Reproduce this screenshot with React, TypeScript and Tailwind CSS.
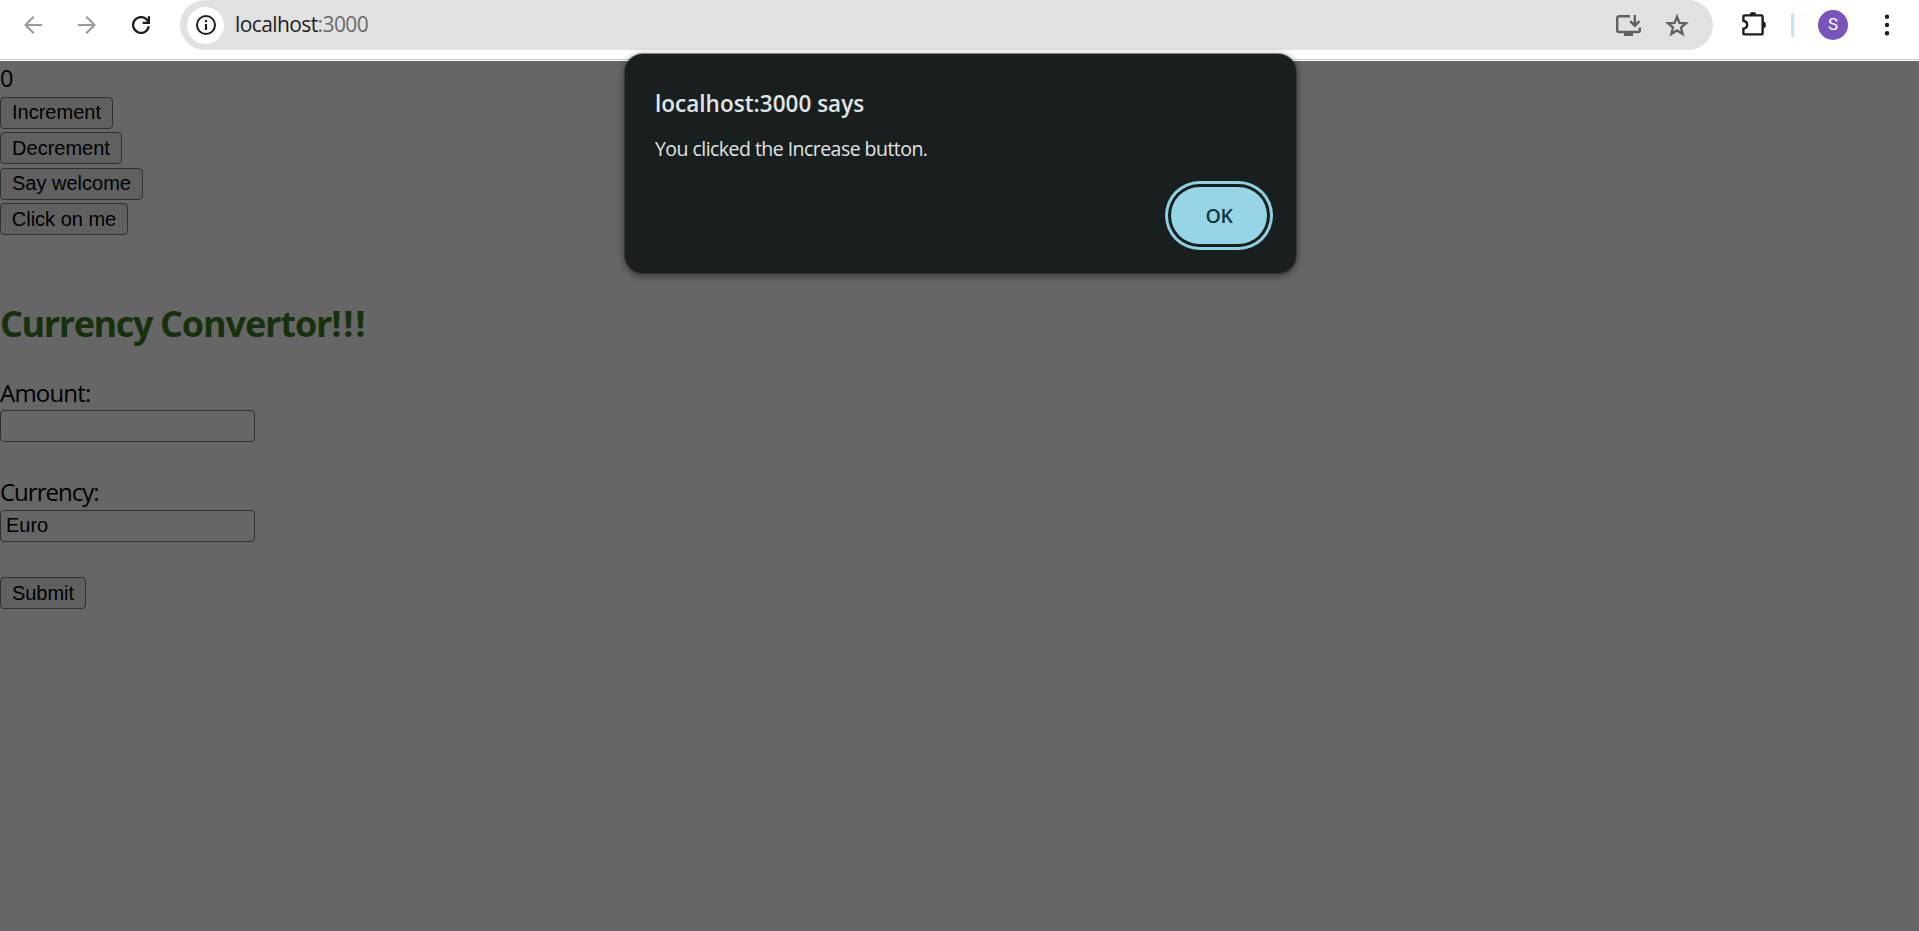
import type { ReactNode } from "react";

function PageButton({ className, children }: { className: string; children: ReactNode }) {
  return (
    <button
      className={`block h-8 shrink-0 rounded-[4px] border border-[#303030] bg-[#606060] text-center text-[20px] leading-[28px] text-black ${className}`}
      style={{ fontFamily: '"Liberation Sans", Arial, sans-serif' }}
    >
      {children}
    </button>
  );
}

function Toolbar() {
  return (
    <header className="flex h-[61px] w-full shrink-0 flex-col bg-white">
      <div className="flex h-[50px] items-center">
        <svg className="ml-[24px] h-[18px] w-[18px]" viewBox="0 0 18 18" fill="none" stroke="#9b9b9b" strokeWidth="2.2">
          <path d="M18 9H1.5M9.7.8 1.5 9l8.2 8.2" />
        </svg>
        <svg className="ml-[36px] h-[18px] w-[18px]" viewBox="0 0 18 18" fill="none" stroke="#9b9b9b" strokeWidth="2.2">
          <path d="M0 9h16.5M8.3.8 16.5 9l-8.2 8.2" />
        </svg>
        <svg className="ml-[36px] h-[18px] w-[18px]" viewBox="0 0 18 18" fill="none" stroke="#1f1f23" strokeWidth="2.3">
          <path d="M16.8 10.3A7.9 7.9 0 1 1 15 3.8l1.9 2.4M16.9.2v6.6h-6.3" />
        </svg>
        <div className="ml-[30px] flex h-[50px] w-[1533px] items-center rounded-full bg-[#e1e1e1]">
          <span className="ml-[7px] flex h-[37px] w-[37px] items-center justify-center rounded-full bg-white">
            <svg className="h-5 w-5" viewBox="0 0 20 20" fill="none" stroke="#1f1f23" strokeWidth="2">
              <circle cx="10" cy="10" r="9" />
              <path d="M10 9v6M10 5v2.2" strokeWidth="2.2" />
            </svg>
          </span>
          <span className="mb-0.5 ml-[11px] text-[21px] leading-[28px] tracking-[-0.6px] text-[#1f1f23]">
            localhost<span className="text-[#6b6b6b]">:3000</span>
          </span>
          <svg className="ml-auto h-[21px] w-[25px]" viewBox="0 0 25 21" fill="none" stroke="#5f6063" strokeWidth="2.4">
            <path d="M14 1.2H3.2a2 2 0 0 0-2 2V15a2 2 0 0 0 2 2h18.6a2 2 0 0 0 2-2v-2.5" />
            <path d="M18.8 0v10.2M14.2 6.2l4.6 4.6 4.6-4.6" />
            <path d="M8 17h9v4H8z" fill="#5f6063" stroke="none" />
          </svg>
          <svg className="mr-[24px] ml-[24px] h-[23px] w-[24px]" viewBox="0 0 24 23" fill="none" stroke="#5f6063" strokeWidth="2.3">
            <path d="m12 2.7 2.4 6.1 6.6.5-5 4.2 1.6 6.4L12 16.4l-5.6 3.5L8 13.5l-5-4.2 6.6-.5z" />
          </svg>
        </div>
        <svg className="mb-0.5 ml-[29px] h-[24px] w-[25px]" viewBox="0 0 25 24" fill="none" stroke="#1f1f23" strokeWidth="2.4">
          <path d="M2.4 3.4h17a1.2 1.2 0 0 1 1.2 1.2v16.6a1.2 1.2 0 0 1-1.2 1.2h-17a1 1 0 0 1-1-1v-4.8c2.5-.3 3.800-2 3.800-3.900S3.900 9.200 1.400 8.700V4.400a1 1 0 0 1 1-1z" />
          <path d="M7.6 3.4a3.4 3.4 0 0 1 6.8 0zM20.6 9.6a3.3 3.3 0 0 1 0 6.6z" fill="#1f1f23" stroke="none" />
        </svg>
        <span className="ml-[24px] h-6 w-[3px] rounded-full bg-[#bde7f1]" />
        <span
          className="ml-[24px] flex h-[30px] w-[30px] items-center justify-center rounded-full bg-[#7856b9] text-[17px] text-white"
          style={{ fontFamily: "Roboto, sans-serif" }}
        >
          S
        </span>
        <svg className="ml-[36px] h-[22px] w-[6px]" viewBox="0 0 6 22" fill="#1f1f23">
          <circle cx="3" cy="2.8" r="2.2" />
          <circle cx="3" cy="11" r="2.2" />
          <circle cx="3" cy="19.2" r="2.2" />
        </svg>
      </div>
      <div className="mt-[9px] h-px w-full bg-[#c8c8c8]" />
    </header>
  );
}

function AlertDialog() {
  return (
    <div className="absolute top-[54px] left-[625px] flex h-[219px] w-[671px] flex-col rounded-[18px] bg-[#191e1e] pl-[30px] text-[#e1e5e5] shadow-[0_2px_7px_1px_rgba(0,0,0,0.45),0_0_0_1px_rgba(40,48,48,0.45)]">
      <h1 className="mt-[34px] h-8 text-[22.5px] leading-8 font-semibold tracking-[0.02px]">localhost:3000 says</h1>
      <p className="mt-[15px] h-7 text-[19.5px] leading-7 tracking-[-0.54px]">You clicked the Increase button.</p>
      <button className="mt-[24px] ml-[516px] h-[57px] w-[96px] rounded-full bg-[#96d5e5] text-[19.5px] font-semibold tracking-[-0.5px] text-[#123640] ring-3 ring-[#8ed0e0] ring-offset-3 ring-offset-[#191e1e]">
        OK
      </button>
    </div>
  );
}

export default function App() {
  return (
    <div
      className="relative flex h-[931px] w-full flex-col overflow-hidden bg-[#666666]"
      style={{ fontFamily: '"Open Sans", "Noto Sans", sans-serif' }}
    >
      <Toolbar />
      <main className="flex flex-1 flex-col items-start text-[24px] leading-[32px] text-black">
        <div className="h-9 pt-px text-[23.5px]">0</div>
        <PageButton className="w-[113px] pb-[2px]">Increment</PageButton>
        <PageButton className="mt-[3px] w-[122px]">Decrement</PageButton>
        <PageButton className="mt-1 w-[143px] pb-[2px]">Say welcome</PageButton>
        <PageButton className="mt-[3px] w-[128px]">Click on me</PageButton>
        <h2 className="mt-[65px] h-12 text-[36px] leading-[48px] font-bold whitespace-pre text-[#17310f]">
          <span className="tracking-[-1.4px]">{"Currency "}</span>
          <span className="tracking-[-1.1px]">Convertor</span>
          <span className="tracking-[1.7px]">!!!</span>
        </h2>
        <label className="mt-[29px] h-8 tracking-[-0.8px]">Amount:</label>
        <div className="mt-px h-8 w-[255px] shrink-0 rounded-[4px] border border-[#303030]" />
        <label className="mt-[34px] h-8 tracking-[-1px]">Currency:</label>
        <div
          className="mt-[2px] h-8 w-[255px] shrink-0 rounded-[4px] border border-[#303030] pl-[5px] text-[20px] leading-[28px]"
          style={{ fontFamily: '"Liberation Sans", Arial, sans-serif' }}
        >
          Euro
        </div>
        <PageButton className="mt-[35px] w-[86px]">Submit</PageButton>
      </main>
      <AlertDialog />
    </div>
  );
}
